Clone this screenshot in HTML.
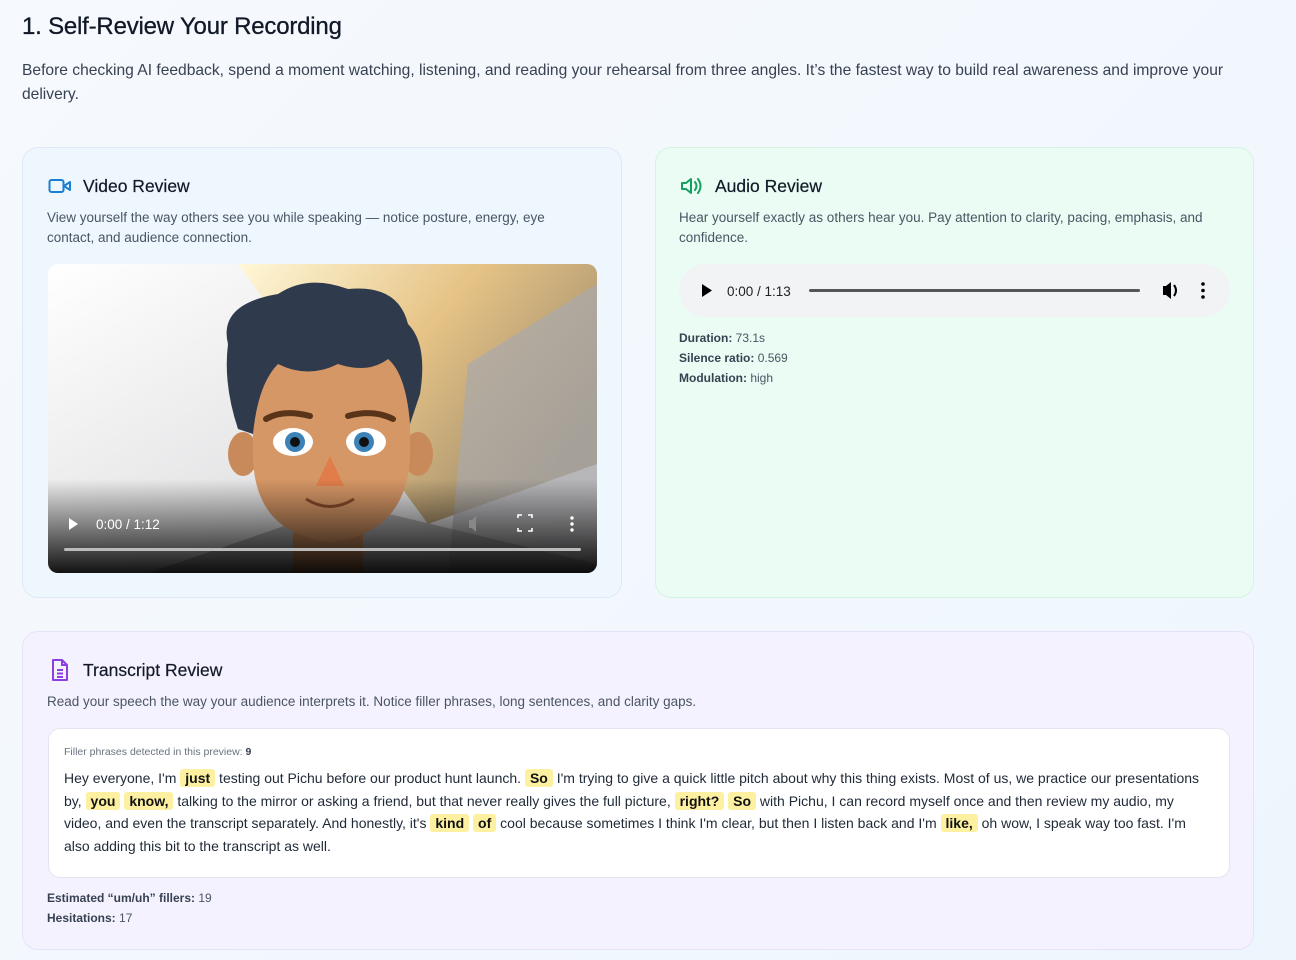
<!DOCTYPE html>
<html><head><meta charset="utf-8"><style>
*{box-sizing:border-box;margin:0;padding:0}
body{width:1296px;height:960px;overflow:hidden;background:linear-gradient(135deg,#f6f9fd,#eef6fd);font-family:"Liberation Sans",sans-serif;color:#1f2937;position:relative}
h1{position:absolute;left:22px;top:13px;font-size:24px;font-weight:400;color:#111827;letter-spacing:-0.2px;-webkit-text-stroke:0.3px #111827}
.intro{position:absolute;left:22px;top:59px;width:1235px;font-size:15.6px;line-height:24px;color:#374151}
.card{position:absolute;border-radius:16px;border:1px solid #dfe9f6}
.card h2{position:absolute;font-size:17.5px;font-weight:400;color:#111827;-webkit-text-stroke:0.2px #111827}
.desc{position:absolute;font-size:13.5px;line-height:20px;color:#4b5563}
.small{font-size:12px;line-height:20px;color:#4b5563}
.small b{font-weight:600;color:#374151}
.hl{background:#fdf0a0;border-radius:3px;padding:1px 5px;font-weight:600;color:#111}
</style></head><body>
<h1>1. Self-Review Your Recording</h1>
<div class="intro">Before checking AI feedback, spend a moment watching, listening, and reading your rehearsal from three angles. It’s the fastest way to build real awareness and improve your delivery.</div>

<div class="card" style="left:22px;top:147px;width:600px;height:451px;background:#eef6fe">
 <svg style="position:absolute;left:25px;top:30px" width="24" height="16" viewBox="0 0 24 16"><rect x="1.5" y="2" width="14" height="12" rx="2" fill="none" stroke="#1a7fd0" stroke-width="2"/><path d="M16 8l6-4v8z" fill="none" stroke="#1a7fd0" stroke-width="2" stroke-linejoin="round"/></svg>
 <h2 style="left:60px;top:28px">Video Review</h2>
 <div class="desc" style="left:24px;top:60px;width:540px">View yourself the way others see you while speaking — notice posture, energy, eye contact, and audience connection.</div>
 <div style="position:absolute;left:25px;top:116px;width:549px;height:309px;border-radius:10px;overflow:hidden;background:#fff">
  <svg width="549" height="309" viewBox="0 0 549 309">
   <defs>
    <linearGradient id="g1" x1="0" y1="0" x2="1" y2="0.6"><stop offset="0" stop-color="#fff8d8"/><stop offset="0.5" stop-color="#e6c386"/><stop offset="1" stop-color="#9c8a6a"/></linearGradient>
    <linearGradient id="g2" x1="0" y1="0" x2="0" y2="1"><stop offset="0" stop-color="#000" stop-opacity="0"/><stop offset="1" stop-color="#000" stop-opacity="0.92"/></linearGradient>
    <linearGradient id="g3" x1="0" y1="0" x2="1" y2="1"><stop offset="0" stop-color="#fff"/><stop offset="1" stop-color="#cfcfd2"/></linearGradient>
   </defs>
   <rect width="549" height="309" fill="url(#g3)"/>
   <polygon points="190,0 549,0 549,200 380,260" fill="url(#g1)"/>
   <polygon points="420,100 549,20 549,309 400,309" fill="#a9a9ad" opacity="0.7"/>
   <polygon points="100,309 300,240 549,300 549,309" fill="#777" opacity="0.5"/>
   <ellipse cx="195" cy="190" rx="15" ry="22" fill="#c98a5b"/>
   <ellipse cx="370" cy="190" rx="15" ry="22" fill="#c98a5b"/>
   <rect x="245" y="250" width="70" height="60" fill="#c98a5b"/>
   <path d="M205 130 Q205 70 282 65 Q360 70 362 135 L362 195 Q357 270 282 278 Q208 270 205 195Z" fill="#d69766"/>
   <path d="M180 80 Q170 40 230 30 Q260 10 300 25 Q350 20 360 60 Q380 80 372 130 L362 160 Q358 110 340 95 Q320 110 290 100 Q260 115 230 100 Q210 120 205 170 L190 165 Q175 120 180 80Z" fill="#2f3b4d"/>
   <path d="M218 155 Q235 145 262 152" stroke="#5a3418" stroke-width="6" fill="none" stroke-linecap="round"/>
   <path d="M300 152 Q325 145 345 155" stroke="#5a3418" stroke-width="6" fill="none" stroke-linecap="round"/>
   <ellipse cx="245" cy="178" rx="20" ry="14" fill="#fff"/><ellipse cx="318" cy="178" rx="20" ry="14" fill="#fff"/>
   <circle cx="247" cy="178" r="10" fill="#3b82b8"/><circle cx="316" cy="178" r="10" fill="#3b82b8"/>
   <circle cx="247" cy="178" r="5" fill="#111"/><circle cx="316" cy="178" r="5" fill="#111"/>
   <path d="M282 192 L268 222 L296 222Z" fill="#e07d4a"/>
   <path d="M258 235 Q282 250 306 235" stroke="#8a4b2a" stroke-width="3" fill="none"/>
   <rect y="215" width="549" height="94" fill="url(#g2)"/>
   <path d="M21 254l9 6-9 6z" fill="#fff"/>
   <text x="48" y="265" fill="#fff" font-size="13.5" font-family="Liberation Sans">0:00 / 1:12</text>
   <path d="M421 256h3l4-4v16l-4-4h-3z" fill="#888"/>
   <path d="M470 254v-3h4M480 251h4v3M484 264v3h-4M474 267h-4v-3" stroke="#fff" stroke-width="1.6" fill="none"/>
   <circle cx="524" cy="254" r="1.7" fill="#fff"/><circle cx="524" cy="260" r="1.7" fill="#fff"/><circle cx="524" cy="266" r="1.7" fill="#fff"/>
   <rect x="16" y="284" width="517" height="3" rx="1.5" fill="#bbb"/>
  </svg>
 </div>
</div>

<div class="card" style="left:655px;top:147px;width:599px;height:451px;background:#eafcf3;border-color:#d5f3e4">
 <svg style="position:absolute;left:24px;top:29px" width="24" height="18" viewBox="0 0 24 18"><path d="M2 6h4l5-4v14l-5-4H2z" fill="none" stroke="#15a05f" stroke-width="2" stroke-linejoin="round"/><path d="M15 5q3 4 0 8M18 2q5 7 0 14" stroke="#15a05f" stroke-width="2" fill="none" stroke-linecap="round"/></svg>
 <h2 style="left:59px;top:28px">Audio Review</h2>
 <div class="desc" style="left:23px;top:60px;width:550px">Hear yourself exactly as others hear you. Pay attention to clarity, pacing, emphasis, and confidence.</div>
 <div style="position:absolute;left:23px;top:116px;width:551px;height:53px;border-radius:27px;background:#f1f3f4">
  <svg width="551" height="53"><path d="M23 20l10 6.5-10 6.5z" fill="#000"/>
  <text x="48" y="32" font-size="13.5" font-family="Liberation Sans" fill="#222">0:00 / 1:13</text>
  <rect x="130" y="25" width="331" height="3" rx="1.5" fill="#555"/>
  <path d="M484 22h3l5-4v17l-5-4h-3z" fill="#000"/><path d="M495 21q4 5.5 0 11" stroke="#000" stroke-width="2" fill="none"/>
  <circle cx="524" cy="20" r="1.8"/><circle cx="524" cy="26.5" r="1.8"/><circle cx="524" cy="33" r="1.8"/></svg>
 </div>
 <div class="small" style="position:absolute;left:23px;top:180px"><b>Duration:</b> 73.1s<br><b>Silence ratio:</b> 0.569<br><b>Modulation:</b> high</div>
</div>

<div class="card" style="left:22px;top:631px;width:1232px;height:319px;background:#f4f2fe;border-color:#e6e3f8">
 <svg style="position:absolute;left:27px;top:26px" width="20" height="24" viewBox="0 0 20 24"><path d="M3 2h9l5 5v15H3z" fill="none" stroke="#8b3fe0" stroke-width="2" stroke-linejoin="round"/><path d="M12 2v5h5M7 12h6M7 15.5h6M7 19h6" stroke="#8b3fe0" stroke-width="2" fill="none"/></svg>
 <h2 style="left:60px;top:28px">Transcript Review</h2>
 <div class="desc" style="left:24px;top:60px">Read your speech the way your audience interprets it. Notice filler phrases, long sentences, and clarity gaps.</div>
 <div style="position:absolute;left:25px;top:96px;width:1182px;height:150px;background:#fff;border-radius:12px;border:1px solid #e3e6ee;padding:17px 15px">
  <div style="font-size:10.5px;color:#6b7280">Filler phrases detected in this preview: <b style="color:#374151">9</b></div>
  <div style="font-size:14px;line-height:22.6px;color:#1f2937;margin-top:9px;width:1145px">Hey everyone, I'm <span class="hl">just</span> testing out Pichu before our product hunt launch. <span class="hl">So</span> I'm trying to give a quick little pitch about why this thing exists. Most of us, we practice our presentations by, <span class="hl">you</span> <span class="hl">know,</span> talking to the mirror or asking a friend, but that never really gives the full picture, <span class="hl">right?</span> <span class="hl">So</span> with Pichu, I can record myself once and then review my audio, my video, and even the transcript separately. And honestly, it's <span class="hl">kind</span> <span class="hl">of</span> cool because sometimes I think I'm clear, but then I listen back and I'm <span class="hl">like,</span> oh wow, I speak way too fast. I'm also adding this bit to the transcript as well.</div>
 </div>
 <div class="small" style="position:absolute;left:24px;top:256px"><b>Estimated “um/uh” fillers:</b> 19<br><b>Hesitations:</b> 17</div>
</div>
</body></html>
